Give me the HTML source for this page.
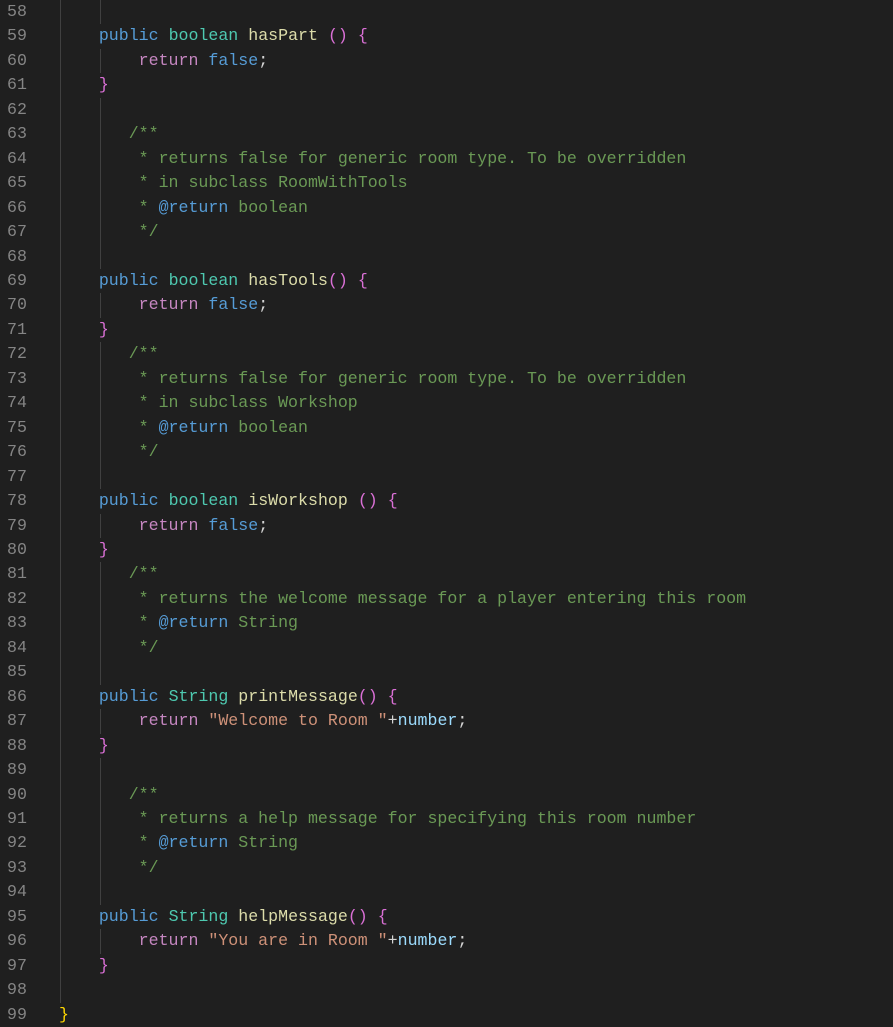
<!DOCTYPE html>
<html><head><style>
html,body{margin:0;padding:0;background:#1f1f1f;width:893px;height:1024px;overflow:hidden}
#c{position:absolute;top:0px;left:0;font-family:"Liberation Mono",monospace;font-size:16.6px;}
.l{height:24.46px;line-height:24.46px;white-space:pre;position:relative}
.n{position:absolute;left:7px;color:#858585}
.t{position:absolute;left:59px;color:#d4d4d4}
.g1{position:absolute;left:60px;top:0;width:1px;height:100%;background:#404040}
.g2{position:absolute;left:100px;top:0;width:1px;height:100%;background:#404040}
.k{color:#569cd6}.ty{color:#4ec9b0}.f{color:#dcdcaa}.r{color:#c586c0}.c{color:#6a9955}.s{color:#ce9178}.v{color:#9cdcfe}.p{color:#da70d6}.y{color:#ffd700}
</style></head><body><div id="c">
<div class="l"><span class="n">58</span><i class="g1"></i><i class="g2"></i></div>
<div class="l"><span class="n">59</span><i class="g1"></i><span class="t">    <span class="k">public</span> <span class="ty">boolean</span> <span class="f">hasPart</span> <span class="p">()</span> <span class="p">{</span></span></div>
<div class="l"><span class="n">60</span><i class="g1"></i><i class="g2"></i><span class="t">        <span class="r">return</span> <span class="k">false</span>;</span></div>
<div class="l"><span class="n">61</span><i class="g1"></i><span class="t">    <span class="p">}</span></span></div>
<div class="l"><span class="n">62</span><i class="g1"></i><i class="g2"></i></div>
<div class="l"><span class="n">63</span><i class="g1"></i><i class="g2"></i><span class="t c">       /**</span></div>
<div class="l"><span class="n">64</span><i class="g1"></i><i class="g2"></i><span class="t c">        * returns false for generic room type. To be overridden</span></div>
<div class="l"><span class="n">65</span><i class="g1"></i><i class="g2"></i><span class="t c">        * in subclass RoomWithTools</span></div>
<div class="l"><span class="n">66</span><i class="g1"></i><i class="g2"></i><span class="t c">        * <span class="k">@return</span> boolean</span></div>
<div class="l"><span class="n">67</span><i class="g1"></i><i class="g2"></i><span class="t c">        */</span></div>
<div class="l"><span class="n">68</span><i class="g1"></i><i class="g2"></i></div>
<div class="l"><span class="n">69</span><i class="g1"></i><span class="t">    <span class="k">public</span> <span class="ty">boolean</span> <span class="f">hasTools</span><span class="p">()</span> <span class="p">{</span></span></div>
<div class="l"><span class="n">70</span><i class="g1"></i><i class="g2"></i><span class="t">        <span class="r">return</span> <span class="k">false</span>;</span></div>
<div class="l"><span class="n">71</span><i class="g1"></i><span class="t">    <span class="p">}</span></span></div>
<div class="l"><span class="n">72</span><i class="g1"></i><i class="g2"></i><span class="t c">       /**</span></div>
<div class="l"><span class="n">73</span><i class="g1"></i><i class="g2"></i><span class="t c">        * returns false for generic room type. To be overridden</span></div>
<div class="l"><span class="n">74</span><i class="g1"></i><i class="g2"></i><span class="t c">        * in subclass Workshop</span></div>
<div class="l"><span class="n">75</span><i class="g1"></i><i class="g2"></i><span class="t c">        * <span class="k">@return</span> boolean</span></div>
<div class="l"><span class="n">76</span><i class="g1"></i><i class="g2"></i><span class="t c">        */</span></div>
<div class="l"><span class="n">77</span><i class="g1"></i><i class="g2"></i></div>
<div class="l"><span class="n">78</span><i class="g1"></i><span class="t">    <span class="k">public</span> <span class="ty">boolean</span> <span class="f">isWorkshop</span> <span class="p">()</span> <span class="p">{</span></span></div>
<div class="l"><span class="n">79</span><i class="g1"></i><i class="g2"></i><span class="t">        <span class="r">return</span> <span class="k">false</span>;</span></div>
<div class="l"><span class="n">80</span><i class="g1"></i><span class="t">    <span class="p">}</span></span></div>
<div class="l"><span class="n">81</span><i class="g1"></i><i class="g2"></i><span class="t c">       /**</span></div>
<div class="l"><span class="n">82</span><i class="g1"></i><i class="g2"></i><span class="t c">        * returns the welcome message for a player entering this room</span></div>
<div class="l"><span class="n">83</span><i class="g1"></i><i class="g2"></i><span class="t c">        * <span class="k">@return</span> String</span></div>
<div class="l"><span class="n">84</span><i class="g1"></i><i class="g2"></i><span class="t c">        */</span></div>
<div class="l"><span class="n">85</span><i class="g1"></i><i class="g2"></i></div>
<div class="l"><span class="n">86</span><i class="g1"></i><span class="t">    <span class="k">public</span> <span class="ty">String</span> <span class="f">printMessage</span><span class="p">()</span> <span class="p">{</span></span></div>
<div class="l"><span class="n">87</span><i class="g1"></i><i class="g2"></i><span class="t">        <span class="r">return</span> <span class="s">"Welcome to Room "</span>+<span class="v">number</span>;</span></div>
<div class="l"><span class="n">88</span><i class="g1"></i><span class="t">    <span class="p">}</span></span></div>
<div class="l"><span class="n">89</span><i class="g1"></i><i class="g2"></i></div>
<div class="l"><span class="n">90</span><i class="g1"></i><i class="g2"></i><span class="t c">       /**</span></div>
<div class="l"><span class="n">91</span><i class="g1"></i><i class="g2"></i><span class="t c">        * returns a help message for specifying this room number</span></div>
<div class="l"><span class="n">92</span><i class="g1"></i><i class="g2"></i><span class="t c">        * <span class="k">@return</span> String</span></div>
<div class="l"><span class="n">93</span><i class="g1"></i><i class="g2"></i><span class="t c">        */</span></div>
<div class="l"><span class="n">94</span><i class="g1"></i><i class="g2"></i></div>
<div class="l"><span class="n">95</span><i class="g1"></i><span class="t">    <span class="k">public</span> <span class="ty">String</span> <span class="f">helpMessage</span><span class="p">()</span> <span class="p">{</span></span></div>
<div class="l"><span class="n">96</span><i class="g1"></i><i class="g2"></i><span class="t">        <span class="r">return</span> <span class="s">"You are in Room "</span>+<span class="v">number</span>;</span></div>
<div class="l"><span class="n">97</span><i class="g1"></i><span class="t">    <span class="p">}</span></span></div>
<div class="l"><span class="n">98</span><i class="g1"></i></div>
<div class="l"><span class="n">99</span><span class="t"><span class="y">}</span></span></div>
</div></body></html>
